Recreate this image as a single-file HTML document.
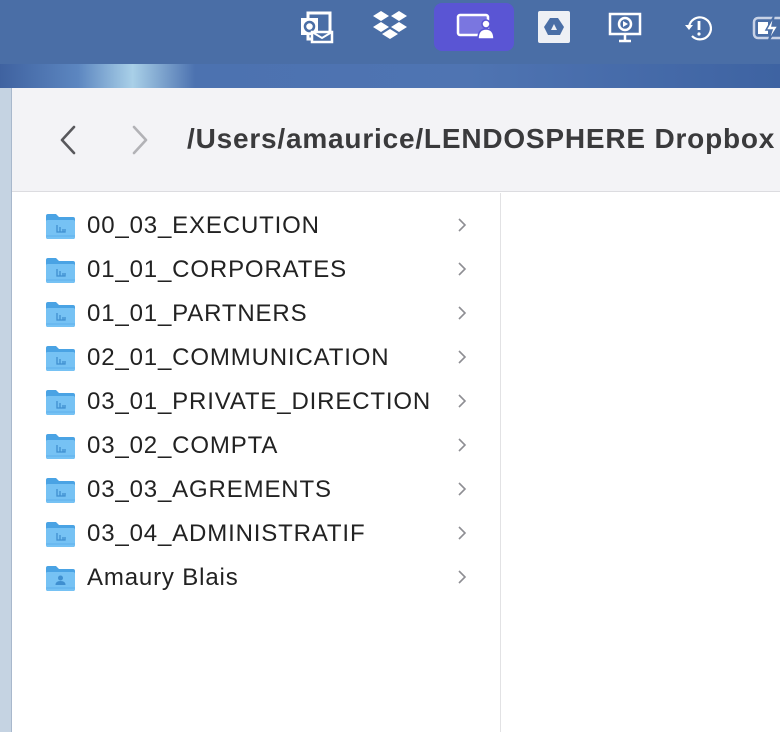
<!DOCTYPE html>
<html><head><meta charset="utf-8"><style>
*{margin:0;padding:0;box-sizing:border-box}
body{width:780px;height:732px;overflow:hidden;position:relative;background:#fff;font-family:"Liberation Sans",sans-serif}
.menubar{position:absolute;left:0;top:0;width:780px;height:64px;background:#4a6ea6}
.wall{position:absolute;left:0;top:64px;width:780px;height:24px;background:linear-gradient(90deg,#3f62a0 0%,#5c86c0 10%,#a9d0e8 17%,#4c72b0 25%,#4f74b2 60%,#3e63a2 100%)}
.leftstrip{position:absolute;left:0;top:88px;width:12px;height:644px;background:#c5d3e2;border-right:1px solid #a8b8cc}
.toolbar{position:absolute;left:12px;top:88px;width:768px;height:104px;background:#f3f3f6;border-bottom:1px solid #dcdce0}
.path{position:absolute;left:187px;top:123px;font-size:28px;letter-spacing:0.8px;font-weight:bold;color:#3a3a3c;white-space:nowrap}
.col{position:absolute;left:500px;top:193px;width:1px;height:539px;background:#e2e2e4}
.row{position:absolute;left:45px;height:30px;width:430px}
.row .t{position:absolute;left:42px;top:1px;font-size:24px;letter-spacing:0.85px;color:#222;line-height:30px;white-space:nowrap}
.row svg.f{position:absolute;left:0;top:3px}
.row svg.c{position:absolute;left:412px;top:8px}
.icon{position:absolute}
</style></head><body>
<div class="menubar"></div>
<div class="wall"></div>
<svg class="icon" style="left:300px;top:10px" width="34" height="34" viewBox="0 0 34 34"><rect x="8" y="3" width="22" height="26" fill="none" stroke="#fff" stroke-width="3"/><rect x="1" y="8" width="17" height="17" fill="#fff"/><circle cx="9.5" cy="16.5" r="4.5" fill="none" stroke="#4a6ea6" stroke-width="2.5"/><rect x="12" y="22" width="20" height="10" fill="#4a6ea6" stroke="#fff" stroke-width="2.5"/><path d="M12 22 L22 28 L32 22" fill="none" stroke="#fff" stroke-width="2"/></svg>
<svg class="icon" style="left:371px;top:10px" width="38" height="34" viewBox="0 0 38 34"><g fill="#fff"><path d="M10 1 L18 6 L10 11 L2 6Z"/><path d="M28 1 L36 6 L28 11 L20 6Z"/><path d="M10 12 L18 17 L10 22 L2 17Z"/><path d="M28 12 L36 17 L28 22 L20 17Z"/><path d="M19 19 L27 24 L19 29 L11 24Z"/></g></svg>
<div class="icon" style="left:434px;top:3px;width:80px;height:48px;background:#5a55d4;border-radius:8px"></div>
<svg class="icon" style="left:456px;top:13px" width="40" height="28" viewBox="0 0 40 28"><rect x="2" y="2" width="30" height="20" rx="2" fill="#7a76e0" stroke="#fff" stroke-width="2.5"/><circle cx="30" cy="11" r="4" fill="#fff" stroke="#5a55d4" stroke-width="1.5"/><path d="M22 26 Q22 16 30 16 Q38 16 38 26Z" fill="#fff" stroke="#5a55d4" stroke-width="1.5"/></svg>
<svg class="icon" style="left:538px;top:11px" width="32" height="32" viewBox="0 0 32 32"><rect width="32" height="32" rx="2" fill="#eef0f5"/><path d="M10 24 L6 16 L12 7 L20 7 L26 16 L22 24Z" fill="#4a6ea6"/><path d="M13 19 L16 13 L19 19Z" fill="#eef0f5"/></svg>
<svg class="icon" style="left:608px;top:12px" width="34" height="32" viewBox="0 0 34 32"><rect x="2" y="2" width="30" height="20" fill="none" stroke="#fff" stroke-width="2.5"/><circle cx="17" cy="12" r="6" fill="none" stroke="#fff" stroke-width="2.5"/><path d="M15 9 L20 12 L15 15Z" fill="#fff"/><path d="M17 22 V28 M11 29 H23" stroke="#fff" stroke-width="2.5"/></svg>
<svg class="icon" style="left:683px;top:14px" width="32" height="30" viewBox="0 0 32 30"><path d="M6 13 A11 11 0 1 1 9 22" fill="none" stroke="#fff" stroke-width="2.2"/><path d="M2 11 L6 16 L10 11Z" fill="#fff"/><path d="M16 7 V16" stroke="#fff" stroke-width="2.8"/><circle cx="16" cy="20" r="1.6" fill="#fff"/></svg>
<svg class="icon" style="left:752px;top:14px" width="28" height="30" viewBox="0 0 28 30"><rect x="2" y="4" width="30" height="20" rx="4" fill="none" stroke="#c8d2e6" stroke-width="2.5"/><rect x="6" y="8" width="10" height="12" fill="#fff"/><path d="M22 2 L14 16 H20 L16 28 L26 12 H20Z" fill="#fff" stroke="#4a6ea6" stroke-width="1.5"/></svg>

<div class="leftstrip"></div>
<div class="toolbar"></div>
<svg class="icon" style="left:56px;top:124px" width="24" height="32" viewBox="0 0 24 32"><path d="M18 3 L6 16 L18 29" fill="none" stroke="#58585c" stroke-width="2.6" stroke-linecap="round" stroke-linejoin="round"/></svg>
<svg class="icon" style="left:128px;top:124px" width="24" height="32" viewBox="0 0 24 32"><path d="M6 3 L18 16 L6 29" fill="none" stroke="#b2b2b6" stroke-width="2.6" stroke-linecap="round" stroke-linejoin="round"/></svg>
<div class="path">/Users/amaurice/LENDOSPHERE Dropbox</div>
<div class="col"></div>

<svg width="0" height="0" style="position:absolute"><defs>
<g id="fold"><path d="M1 3 Q1 1 3 1 H11 L14 4 H28 Q30 4 30 6 V24 Q30 26 28 26 H3 Q1 26 1 24Z" fill="#4aa3e4"/><path d="M1 8 Q1 7 3 7 H28 Q30 7 30 9 V24 Q30 26 28 26 H3 Q1 26 1 24Z" fill="#76c2f4"/><path d="M1 23 H30" stroke="#5fb0ec" stroke-width="1"/></g>
</defs></svg>

<div class="row" style="top:210px"><svg class="f" width="31" height="27" viewBox="0 0 31 27"><use href="#fold"/><path d="M12 12 V19 H20 V16 M15 14 V19 M18 16 V19" fill="none" stroke="#3f8fd0" stroke-width="1.3"/></svg><span class="t">00_03_EXECUTION</span><svg class="c" width="10" height="14"><path d="M2 1 L8 7 L2 13" fill="none" stroke="#8e8e93" stroke-width="1.6"/></svg></div>
<div class="row" style="top:254px"><svg class="f" width="31" height="27" viewBox="0 0 31 27"><use href="#fold"/><path d="M12 12 V19 H20 V16 M15 14 V19 M18 16 V19" fill="none" stroke="#3f8fd0" stroke-width="1.3"/></svg><span class="t">01_01_CORPORATES</span><svg class="c" width="10" height="14"><path d="M2 1 L8 7 L2 13" fill="none" stroke="#8e8e93" stroke-width="1.6"/></svg></div>
<div class="row" style="top:298px"><svg class="f" width="31" height="27" viewBox="0 0 31 27"><use href="#fold"/><path d="M12 12 V19 H20 V16 M15 14 V19 M18 16 V19" fill="none" stroke="#3f8fd0" stroke-width="1.3"/></svg><span class="t">01_01_PARTNERS</span><svg class="c" width="10" height="14"><path d="M2 1 L8 7 L2 13" fill="none" stroke="#8e8e93" stroke-width="1.6"/></svg></div>
<div class="row" style="top:342px"><svg class="f" width="31" height="27" viewBox="0 0 31 27"><use href="#fold"/><path d="M12 12 V19 H20 V16 M15 14 V19 M18 16 V19" fill="none" stroke="#3f8fd0" stroke-width="1.3"/></svg><span class="t">02_01_COMMUNICATION</span><svg class="c" width="10" height="14"><path d="M2 1 L8 7 L2 13" fill="none" stroke="#8e8e93" stroke-width="1.6"/></svg></div>
<div class="row" style="top:386px"><svg class="f" width="31" height="27" viewBox="0 0 31 27"><use href="#fold"/><path d="M12 12 V19 H20 V16 M15 14 V19 M18 16 V19" fill="none" stroke="#3f8fd0" stroke-width="1.3"/></svg><span class="t">03_01_PRIVATE_DIRECTION</span><svg class="c" width="10" height="14"><path d="M2 1 L8 7 L2 13" fill="none" stroke="#8e8e93" stroke-width="1.6"/></svg></div>
<div class="row" style="top:430px"><svg class="f" width="31" height="27" viewBox="0 0 31 27"><use href="#fold"/><path d="M12 12 V19 H20 V16 M15 14 V19 M18 16 V19" fill="none" stroke="#3f8fd0" stroke-width="1.3"/></svg><span class="t">03_02_COMPTA</span><svg class="c" width="10" height="14"><path d="M2 1 L8 7 L2 13" fill="none" stroke="#8e8e93" stroke-width="1.6"/></svg></div>
<div class="row" style="top:474px"><svg class="f" width="31" height="27" viewBox="0 0 31 27"><use href="#fold"/><path d="M12 12 V19 H20 V16 M15 14 V19 M18 16 V19" fill="none" stroke="#3f8fd0" stroke-width="1.3"/></svg><span class="t">03_03_AGREMENTS</span><svg class="c" width="10" height="14"><path d="M2 1 L8 7 L2 13" fill="none" stroke="#8e8e93" stroke-width="1.6"/></svg></div>
<div class="row" style="top:518px"><svg class="f" width="31" height="27" viewBox="0 0 31 27"><use href="#fold"/><path d="M12 12 V19 H20 V16 M15 14 V19 M18 16 V19" fill="none" stroke="#3f8fd0" stroke-width="1.3"/></svg><span class="t">03_04_ADMINISTRATIF</span><svg class="c" width="10" height="14"><path d="M2 1 L8 7 L2 13" fill="none" stroke="#8e8e93" stroke-width="1.6"/></svg></div>
<div class="row" style="top:562px"><svg class="f" width="31" height="27" viewBox="0 0 31 27"><use href="#fold"/><circle cx="15.5" cy="13" r="2.5" fill="#3f8fd0"/><path d="M10.5 20 Q10.5 16 15.5 16 Q20.5 16 20.5 20Z" fill="#3f8fd0"/></svg><span class="t">Amaury Blais</span><svg class="c" width="10" height="14"><path d="M2 1 L8 7 L2 13" fill="none" stroke="#8e8e93" stroke-width="1.6"/></svg></div>
</body></html>
